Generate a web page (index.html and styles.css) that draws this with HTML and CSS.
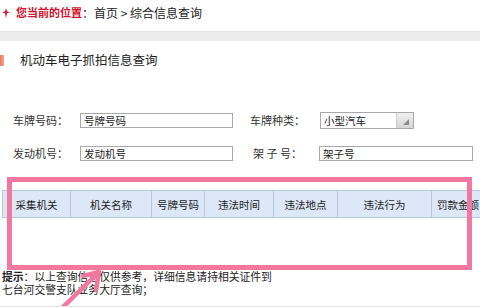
FILE: index.html
```html
<!DOCTYPE html>
<html lang="zh-CN">
<head>
<meta charset="utf-8">
<title>机动车电子抓拍信息查询</title>
<link rel="stylesheet" href="styles.css">
</head>
<body>
<div class="page">
  <div class="crumb">
    <svg class="star" width="8" height="10" viewBox="0 0 8 10"><path d="M4 0 L5 3.6 L8 4.2 L5 5.2 L4 10 L3 5.2 L0 4.2 L3 3.6 Z" fill="#d4102c"/></svg>
    <span class="here">您当前的位置</span><span class="path">：首页 &gt; 综合信息查询</span>
  </div>
  <div class="band"></div>
  <div class="title"><span class="bar"></span><span class="title-text">机动车电子抓拍信息查询</span></div>

  <div class="form">
    <div class="lbl">车牌号码：</div>
    <div class="inp">号牌号码</div>
    <div class="lbl lbl-2">车牌种类：</div>
    <div class="sel"><span class="sel-text">小型汽车</span><span class="sel-btn"><span class="grip"></span></span></div>

    <div class="lbl">发动机号：</div>
    <div class="inp">发动机号</div>
    <div class="lbl lbl-3">架 子 号：</div>
    <div class="inp inp-wide">架子号</div>
  </div>

  <table class="grid">
    <colgroup>
      <col class="c1"><col class="c2"><col class="c3"><col class="c4"><col class="c5"><col class="c6"><col class="c7">
    </colgroup>
    <thead>
      <tr><th>采集机关</th><th>机关名称</th><th>号牌号码</th><th>违法时间</th><th>违法地点</th><th>违法行为</th><th class="last">罚款金额</th></tr>
    </thead>
    <tbody>
      <tr class="empty"><td colspan="7"></td></tr>
    </tbody>
  </table>

  <div class="hint">
    <div class="hint-line"><b>提示</b>：以上查询信息仅供参考，详细信息请持相关证件到</div>
    <div class="hint-line">七台河交警支队业务大厅查询；</div>
  </div>

  <div class="mark-box"></div>
  <svg class="mark-arrow" width="480" height="307" viewBox="0 0 480 307">
    <g stroke="#f2789f" stroke-width="4.5" stroke-linecap="round" fill="none">
      <path d="M60 310 L99 272"/>
      <path d="M99 272 L83 276"/>
      <path d="M99 272 L96 290"/>
    </g>
  </svg>
</div>
</body>
</html>
```

FILE: styles.css
```css
html, body {
  margin: 0;
  padding: 0;
  overflow: hidden;
  background: #fff;
}
body {
  font-family: "Noto Sans CJK SC", "Noto Sans", sans-serif;
  font-size: 10.5px;
  color: #222;
}
.page {
  position: relative;
  width: 480px;
  height: 306px;
  border-bottom: 1px solid #e3e3e3;
  overflow: hidden;
}
.crumb {
  height: 31px;
  display: flex;
  align-items: center;
  padding-bottom: 6px;
  box-sizing: border-box;
  padding-left: 2px;
  font-size: 12px;
  line-height: 25px;
}
.star {
  margin-right: 6px;
}
.here {
  color: #d4102c;
  font-weight: bold;
  font-size: 11px;
}
.path {
  color: #222;
}
.band {
  height: 10px;
  background: #ececec;
  border-top: 1px solid #e4e4e4;
  box-sizing: border-box;
}
.title {
  display: flex;
  align-items: center;
  padding-top: 11px;
  height: 16px;
  line-height: 16px;
  font-size: 12.5px;
  color: #222;
}
.bar {
  width: 4px;
  height: 11px;
  background: linear-gradient(90deg, #e9785c, #f4a98f);
  margin-right: 16px;
}
.form {
  margin-top: 44px;
  padding-left: 13px;
  display: grid;
  grid-template-columns: 67px 153px 86px auto;
  grid-auto-rows: 17px;
  row-gap: 16px;
  align-items: center;
}
.lbl {
  color: #333;
  font-size: 11px;
  line-height: 17px;
  white-space: pre;
}
.lbl-2 {
  padding-left: 17px;
}
.lbl-3 {
  padding-left: 20px;
}
.inp {
  height: 15px;
  box-sizing: border-box;
  border: 1px solid #a8a8a8;
  padding-left: 3px;
  line-height: 13px;
  color: #222;
  background: #fff;
}
.inp-wide {
  width: 154px;
}
.sel {
  width: 94px;
  height: 17px;
  margin-left: 1px;
  box-sizing: border-box;
  border: 1px solid #a8a8a8;
  display: flex;
  background: #fff;
}
.sel-text {
  flex: 1;
  padding-left: 3px;
  line-height: 15px;
}
.sel-btn {
  width: 16px;
  position: relative;
  background: linear-gradient(180deg, #f0f0f0, #d6d6d6);
  border-left: 1px solid #cfcfcf;
}
.grip {
  position: absolute;
  right: 4px;
  bottom: 3px;
  width: 0;
  height: 0;
  border-left: 6px solid transparent;
  border-bottom: 6px solid #8c8c8c;
}
.grid {
  margin-top: 28px;
  margin-left: 2px;
  border-collapse: collapse;
  table-layout: fixed;
  width: 483px;
}
.c1 { width: 68px; }
.c2 { width: 81px; }
.c3 { width: 53px; }
.c4 { width: 69px; }
.c5 { width: 64px; }
.c6 { width: 94px; }
.c7 { width: 54px; }
.grid th {
  height: 26px;
  padding: 0;
  background: #dce8f7;
  border: 1px solid #b6c8de;
  font-weight: normal;
  color: #222;
  text-align: center;
  white-space: nowrap;
}
.grid th.last {
  text-align: left;
  padding-left: 5px;
}
.grid .empty td {
  height: 52px;
  padding: 0;
}
.hint {
  margin-top: 0;
  margin-left: 2px;
  font-size: 10.8px;
  color: #222;
}
.hint-line {
  height: 12.5px;
  line-height: 13px;
  overflow: visible;
}
.hint b {
  font-weight: bold;
}
.mark-box {
  position: absolute;
  left: 7px;
  top: 177px;
  width: 465px;
  height: 93px;
  box-sizing: border-box;
  border: 5px solid #f2789f;
}
.mark-arrow {
  position: absolute;
  left: 0;
  top: 0;
}
```
